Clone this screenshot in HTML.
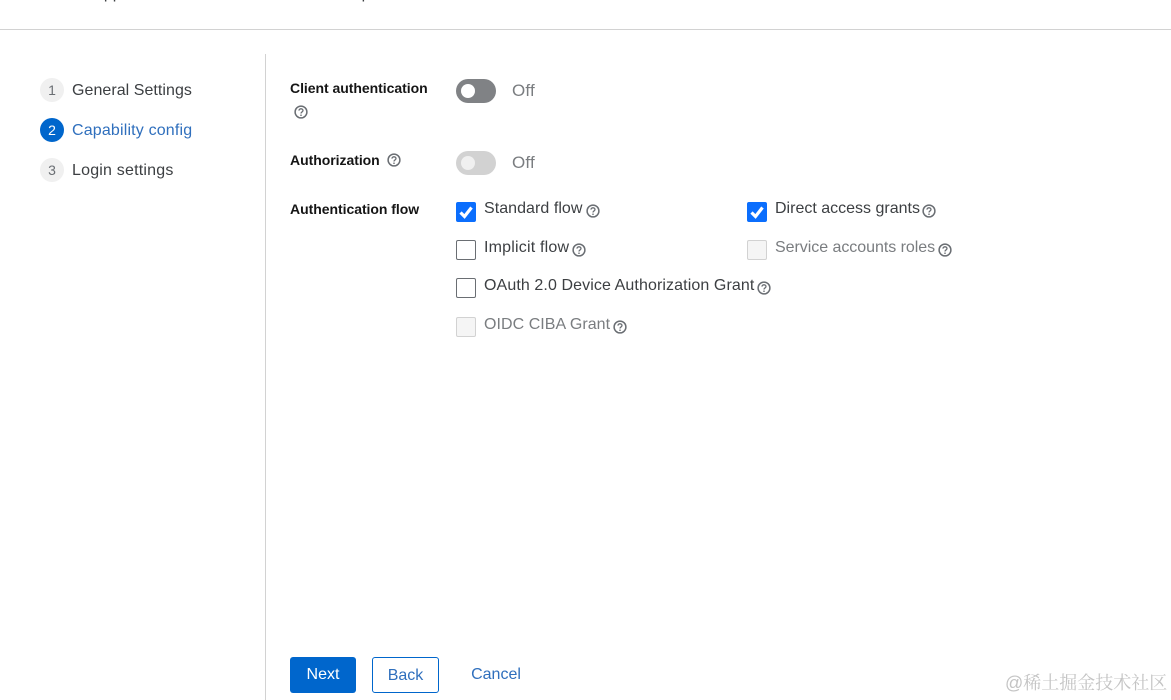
<!DOCTYPE html>
<html lang="en">
<head>
<meta charset="utf-8">
<title>Capability config</title>
<style>
html,body{margin:0;padding:0;background:#fff}
body{width:1171px;height:700px;position:relative;overflow:hidden;font-family:"Liberation Sans",sans-serif;font-size:16px;color:#151515}
.a{position:absolute;white-space:nowrap}
.t{line-height:20px;height:20px;letter-spacing:.05px}
.num{position:absolute;left:40px;width:24px;height:24px;border-radius:50%;background:#f0f0f0;color:#6a6e73;text-align:center;line-height:24px;font-size:14px}
.lbl{font-size:14px;font-weight:bold;letter-spacing:-.04px;line-height:20px;color:#151515}
.cb{position:absolute;width:20px;height:20px;box-sizing:border-box;border:1px solid #6a6e73;border-radius:2px;background:#fff}
.cb.on{background:#0b6efd;border-color:#0b6efd}
.cb.off{background:#f5f5f5;border-color:#d2d2d2}
.cb svg{position:absolute;left:0;top:0}
.sw{position:absolute;left:456px;width:40px;height:24px;border-radius:12px}
.sw i{position:absolute;left:5px;top:5px;width:14px;height:14px;border-radius:50%;background:#fff}
.off-t{color:#7a7d80;font-size:17px;letter-spacing:.2px}
.help{position:absolute;width:14px;height:14px}
.btn{position:absolute;top:657px;height:36px;box-sizing:border-box;border-radius:3px;text-align:center;line-height:35px;font-size:16px}
</style>
</head>
<body>
<div class="a" style="left:13px;top:-16px;line-height:20px;color:#3c3f42;word-spacing:.5px">Clients are applications and services that can request authentication.</div>
<div class="a" style="left:0;top:29px;width:1171px;height:1px;background:#d2d2d2"></div>
<div class="a" style="left:265px;top:54px;width:1px;height:646px;background:#d2d2d2"></div>

<div class="num" style="top:78px">1</div>
<div class="a t" style="left:72px;top:81px;color:#3c3f42">General Settings</div>
<div class="num" style="top:118px;background:#06c;color:#fff">2</div>
<div class="a t" style="left:72px;top:121px;color:#2f6fbd;letter-spacing:.17px">Capability config</div>
<div class="num" style="top:158px">3</div>
<div class="a t" style="left:72px;top:161px;color:#3c3f42;letter-spacing:.2px">Login settings</div>

<div class="a lbl" style="left:290px;top:78px">Client authentication</div>
<svg class="help" style="left:294px;top:105px" viewBox="0 0 14 14"><circle cx="7" cy="7" r="5.9" fill="none" stroke="#6a6e73" stroke-width="1.5"/><path d="M5 5.6C5 4.4 6 3.800 7 3.800s2 .7 2 1.700c0 1.500-2 1.400-2 3" fill="none" stroke="#6a6e73" stroke-width="1.300"/><circle cx="7" cy="10.200" r=".8" fill="#6a6e73"/></svg>
<div class="a lbl" style="left:290px;top:150px">Authorization</div>
<svg class="help" style="left:387px;top:153px" viewBox="0 0 14 14"><circle cx="7" cy="7" r="5.9" fill="none" stroke="#6a6e73" stroke-width="1.5"/><path d="M5 5.6C5 4.4 6 3.800 7 3.800s2 .7 2 1.700c0 1.500-2 1.400-2 3" fill="none" stroke="#6a6e73" stroke-width="1.300"/><circle cx="7" cy="10.200" r=".8" fill="#6a6e73"/></svg>
<div class="a lbl" style="left:290px;top:199px">Authentication flow</div>

<div class="sw" style="top:79px;background:#808285"><i></i></div>
<div class="a t off-t" style="left:512px;top:81px">Off</div>
<div class="sw" style="top:151px;background:#d2d2d2"><i style="background:#f0f0f0"></i></div>
<div class="a t off-t" style="left:512px;top:153px">Off</div>

<div class="cb on" style="left:456px;top:202px"><svg width="18" height="18" viewBox="0 0 18 18"><path d="M3.500 9.500L7.500 13.500L14.500 4.500" fill="none" stroke="#fff" stroke-width="3.200"/></svg></div>
<div class="a t" style="left:484px;top:199px;color:#3c3f42">Standard flow</div>
<svg class="help" style="left:586px;top:204px" viewBox="0 0 14 14"><circle cx="7" cy="7" r="5.9" fill="none" stroke="#6a6e73" stroke-width="1.5"/><path d="M5 5.6C5 4.4 6 3.800 7 3.800s2 .7 2 1.700c0 1.500-2 1.400-2 3" fill="none" stroke="#6a6e73" stroke-width="1.300"/><circle cx="7" cy="10.200" r=".8" fill="#6a6e73"/></svg>

<div class="cb" style="left:456px;top:240px"></div>
<div class="a t" style="left:484px;top:238px;color:#3c3f42;letter-spacing:.2px">Implicit flow</div>
<svg class="help" style="left:572px;top:243px" viewBox="0 0 14 14"><circle cx="7" cy="7" r="5.9" fill="none" stroke="#6a6e73" stroke-width="1.5"/><path d="M5 5.6C5 4.4 6 3.800 7 3.800s2 .7 2 1.700c0 1.500-2 1.400-2 3" fill="none" stroke="#6a6e73" stroke-width="1.300"/><circle cx="7" cy="10.200" r=".8" fill="#6a6e73"/></svg>

<div class="cb" style="left:456px;top:278px"></div>
<div class="a t" style="left:484px;top:276px;color:#3c3f42;letter-spacing:.1px">OAuth 2.0 Device Authorization Grant</div>
<svg class="help" style="left:757px;top:281px" viewBox="0 0 14 14"><circle cx="7" cy="7" r="5.9" fill="none" stroke="#6a6e73" stroke-width="1.5"/><path d="M5 5.6C5 4.4 6 3.800 7 3.800s2 .7 2 1.700c0 1.500-2 1.400-2 3" fill="none" stroke="#6a6e73" stroke-width="1.300"/><circle cx="7" cy="10.200" r=".8" fill="#6a6e73"/></svg>

<div class="cb off" style="left:456px;top:317px"></div>
<div class="a t" style="left:484px;top:315px;color:#7a7d80">OIDC CIBA Grant</div>
<svg class="help" style="left:613px;top:320px" viewBox="0 0 14 14"><circle cx="7" cy="7" r="5.9" fill="none" stroke="#6a6e73" stroke-width="1.5"/><path d="M5 5.6C5 4.4 6 3.800 7 3.800s2 .7 2 1.700c0 1.500-2 1.400-2 3" fill="none" stroke="#6a6e73" stroke-width="1.300"/><circle cx="7" cy="10.200" r=".8" fill="#6a6e73"/></svg>

<div class="cb on" style="left:747px;top:202px"><svg width="18" height="18" viewBox="0 0 18 18"><path d="M3.500 9.500L7.500 13.500L14.500 4.500" fill="none" stroke="#fff" stroke-width="3.200"/></svg></div>
<div class="a t" style="left:775px;top:199px;color:#3c3f42;letter-spacing:0">Direct access grants</div>
<svg class="help" style="left:922px;top:204px" viewBox="0 0 14 14"><circle cx="7" cy="7" r="5.9" fill="none" stroke="#6a6e73" stroke-width="1.5"/><path d="M5 5.6C5 4.4 6 3.800 7 3.800s2 .7 2 1.700c0 1.500-2 1.400-2 3" fill="none" stroke="#6a6e73" stroke-width="1.300"/><circle cx="7" cy="10.200" r=".8" fill="#6a6e73"/></svg>

<div class="cb off" style="left:747px;top:240px"></div>
<div class="a t" style="left:775px;top:238px;color:#7a7d80;letter-spacing:-.04px">Service accounts roles</div>
<svg class="help" style="left:938px;top:243px" viewBox="0 0 14 14"><circle cx="7" cy="7" r="5.9" fill="none" stroke="#6a6e73" stroke-width="1.5"/><path d="M5 5.6C5 4.4 6 3.800 7 3.800s2 .7 2 1.700c0 1.500-2 1.400-2 3" fill="none" stroke="#6a6e73" stroke-width="1.300"/><circle cx="7" cy="10.200" r=".8" fill="#6a6e73"/></svg>

<div class="btn" style="left:290px;width:66px;background:#06c;color:#fff">Next</div>
<div class="btn" style="left:372px;width:67px;border:1px solid #06c;color:#2f6fbd">Back</div>
<div class="btn" style="left:456px;width:80px;color:#2f6fbd">Cancel</div>

<div class="a" style="left:1005px;top:671px;font-family:'Liberation Sans','Noto Serif CJK SC',serif;font-size:18px;line-height:24px;color:#c4c4c4;white-space:nowrap">@稀土掘金技术社区</div>
</body>
</html>
